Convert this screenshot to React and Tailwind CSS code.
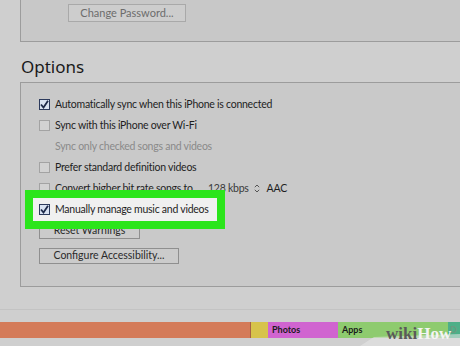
import React from 'react'

function Box({ checked }) {
	if (checked) {
		return (
			<span className="w-[11px] h-[11px] shrink-0 border border-[#2c3a5c] bg-[#d8e2f2] flex items-center justify-center">
				<svg width="9" height="9" viewBox="0 0 9 9">
					<path d="M1 4.5 L3.5 7.5 L8 0.8" fill="none" stroke="#1d2a4a" strokeWidth="1.8" />
				</svg>
			</span>
		)
	}
	return <span className="w-[11px] h-[11px] shrink-0 border border-[#a3a3a3] bg-[#d2d2d2]" />
}

function Row({ checked, children }) {
	return (
		<div className="h-[21px] flex items-center gap-[5px]">
			<Box checked={checked} />
			<span className="text-[10.5px] tracking-[-0.25px] text-[#1e1e1e] whitespace-nowrap">{children}</span>
		</div>
	)
}

export default function App() {
	return (
		<div className="w-[460px] h-[346px] overflow-hidden bg-[#cfcfcf] relative" style={{ fontFamily: 'Lato, "Noto Sans", sans-serif' }}>
			{/* upper panel */}
			<div className="ml-[20px] h-[42px] border-l border-b border-[#9c9c9c] bg-[#c8c8c8] pt-[4px] pl-[47px]">
				<div className="w-[118px] h-[18px] border border-[#a9a9a9] bg-[#cdcdcd] text-[11px] text-[#6c6c6c] flex items-center justify-center">
					Change Password...
				</div>
			</div>

			<div className="h-[40px] pl-[21px] pt-[13px] text-[17px] leading-[24px] text-[#1a1a1a]" style={{ fontFamily: '"Noto Sans", sans-serif' }}>Options</div>

			{/* options panel */}
			<div className="ml-[20px] border-l border-t border-b border-[#9c9c9c] bg-[#c9c9c9] pt-[11px] pb-[22px] pl-[18px]">
				<Row checked>Automatically sync when this iPhone is connected</Row>
				<Row>Sync with this iPhone over Wi-Fi</Row>
				<div className="h-[21px] flex items-center pl-[16px] text-[10.5px] tracking-[-0.25px] text-[#8a8a8a]">Sync only checked songs and videos</div>
				<Row>Prefer standard definition videos</Row>
				<div className="h-[21px] flex items-center gap-[5px] text-[10.5px] tracking-[-0.25px] text-[#1e1e1e] whitespace-nowrap">
					<Box />
					<span className="w-[148px]">Convert higher bit rate songs to</span>
					<span className="text-[#3a3a3a]">128 kbps</span>
					<svg width="6" height="9" viewBox="0 0 6 9">
						<path d="M0.8 3.2 L3 1 L5.2 3.2 M0.8 5.8 L3 8 L5.2 5.8" fill="none" stroke="#555" strokeWidth="1" />
					</svg>
					<span className="ml-[2px]">AAC</span>
				</div>
				<div className="relative z-10 -my-[9px] -ml-[14px] w-[200px] h-[39px] border-[8px] border-[#2be51b] bg-[#f0f0f0] flex items-center gap-[5px] pl-[6px]">
					<Box checked />
					<span className="text-[10.5px] tracking-[-0.25px] text-[#1e1e1e] whitespace-nowrap">Manually manage music and videos</span>
				</div>
				<div className="mt-[3px] w-[101px] h-[16px] border border-[#8f8f8f] bg-[#cbcbcb] text-[10.5px] text-[#2a2a2a] flex items-center justify-center">
					Reset Warnings
				</div>
				<div className="mt-[9px] w-[140px] h-[16px] border border-[#8f8f8f] bg-[#cbcbcb] text-[10.5px] text-[#2a2a2a] flex items-center justify-center">
					Configure Accessibility...
				</div>
			</div>

			{/* capacity bar */}
			<div className="mt-[22px] border-t border-[#c3c3c3] pt-[12px]">
				<div className="h-[16px] flex text-[9px] font-bold text-[#1b1b1b]">
					<div className="w-[251px] bg-[#d47b59] border-r border-[#a86046]" />
					<div className="w-[17px] bg-[#d7c34b]" />
					<div className="w-[70px] bg-[#d064d0] pl-[4px] flex items-center">Photos</div>
					<div className="w-[110px] bg-[#8ecb6f] pl-[4px] flex items-center">Apps</div>
					<div className="flex-1 bg-[#4daf88] pl-[2px] flex items-center text-[#6a9a80]">D</div>
				</div>
			</div>

			{/* wikiHow mark */}
			<svg className="absolute left-[360px] top-[326px]" width="100" height="20" viewBox="0 0 100 20">
				<polygon points="14,11 100,8 100,20 0,20" fill="#e8e8e8" fillOpacity="0.55" />
			</svg>
			<div className="absolute left-[386px] top-[324px] text-[17px] font-bold leading-[20px]" style={{ fontFamily: '"Liberation Serif", serif' }}>
				<span className="text-[#5a5a5a]">wiki</span>
				<span className="text-[#f4f4f4]">How</span>
			</div>
		</div>
	)
}
